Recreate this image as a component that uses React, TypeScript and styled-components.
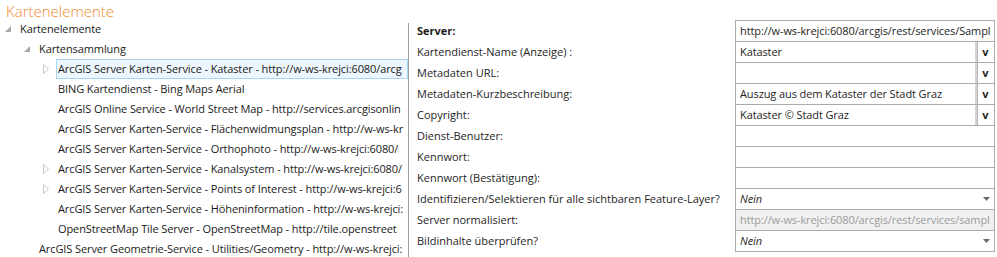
import React from 'react'
import styled, { createGlobalStyle, css } from 'styled-components'

const GlobalStyle = createGlobalStyle`
  html, body {
    margin: 0;
    padding: 0;
    background: #ffffff;
  }
  body {
    font-family: 'Open Sans', 'Noto Sans', sans-serif;
    font-size: 11px;
    color: #1e1e1e;
  }
`

type Toggle = 'open' | 'closed' | 'none'

interface TreeItem {
  level: number
  text: string
  toggle: Toggle
  selected?: boolean
}

const treeItems: TreeItem[] = [
  { level: 0, text: 'Kartenelemente', toggle: 'open' },
  { level: 1, text: 'Kartensammlung', toggle: 'open' },
  { level: 2, text: 'ArcGIS Server Karten-Service - Kataster - http://w-ws-krejci:6080/arcg', toggle: 'closed', selected: true },
  { level: 2, text: 'BING Kartendienst - Bing Maps Aerial', toggle: 'none' },
  { level: 2, text: 'ArcGIS Online Service - World Street Map - http://services.arcgisonlin', toggle: 'none' },
  { level: 2, text: 'ArcGIS Server Karten-Service - Flächenwidmungsplan - http://w-ws-kr', toggle: 'none' },
  { level: 2, text: 'ArcGIS Server Karten-Service - Orthophoto - http://w-ws-krejci:6080/', toggle: 'none' },
  { level: 2, text: 'ArcGIS Server Karten-Service - Kanalsystem - http://w-ws-krejci:6080/', toggle: 'closed' },
  { level: 2, text: 'ArcGIS Server Karten-Service - Points of Interest - http://w-ws-krejci:6', toggle: 'closed' },
  { level: 2, text: 'ArcGIS Server Karten-Service - Höheninformation - http://w-ws-krejci:', toggle: 'none' },
  { level: 2, text: 'OpenStreetMap Tile Server - OpenStreetMap - http://tile.openstreet', toggle: 'none' },
  { level: 1, text: 'ArcGIS Server Geometrie-Service - Utilities/Geometry - http://w-ws-krejci:', toggle: 'none' },
]

type FieldKind = 'text' | 'lookup' | 'select' | 'disabled'

interface FormRow {
  label: string
  kind: FieldKind
  value?: string
  bold?: boolean
}

const formRows: FormRow[] = [
  { label: 'Server:', kind: 'text', value: 'http://w-ws-krejci:6080/arcgis/rest/services/Sampl', bold: true },
  { label: 'Kartendienst-Name (Anzeige) :', kind: 'lookup', value: 'Kataster' },
  { label: 'Metadaten URL:', kind: 'lookup', value: '' },
  { label: 'Metadaten-Kurzbeschreibung:', kind: 'lookup', value: 'Auszug aus dem Kataster der Stadt Graz' },
  { label: 'Copyright:', kind: 'lookup', value: 'Kataster © Stadt Graz' },
  { label: 'Dienst-Benutzer:', kind: 'text' },
  { label: 'Kennwort:', kind: 'text' },
  { label: 'Kennwort (Bestätigung):', kind: 'text' },
  { label: 'Identifizieren/Selektieren für alle sichtbaren Feature-Layer?', kind: 'select', value: 'Nein' },
  { label: 'Server normalisiert:', kind: 'disabled', value: 'http://w-ws-krejci:6080/arcgis/rest/services/sampl' },
  { label: 'Bildinhalte überprüfen?', kind: 'select', value: 'Nein' },
]

const Page = styled.div`
  display: flex;
  width: 997px;
  height: 257px;
  overflow: hidden;
`

const TreePanel = styled.div`
  width: 408px;
  flex-shrink: 0;
  display: flex;
  flex-direction: column;
`

const Title = styled.div`
  height: 19px;
  padding: 1px 0 0 6px;
  box-sizing: border-box;
  font-size: 15px;
  line-height: 20px;
  font-weight: 300;
  color: #ee8a2e;
  white-space: nowrap;
`

const TreeList = styled.div`
  display: flex;
  flex-direction: column;
`

const TreeRow = styled.div<{ $level: number }>`
  display: flex;
  align-items: stretch;
  height: 20px;
  padding-left: ${(p) => 2 + p.$level * 19}px;
`

const ToggleBox = styled.div`
  width: 16px;
  flex-shrink: 0;
  display: flex;
  align-items: center;
  justify-content: flex-start;
  padding-left: 3px;
  box-sizing: border-box;
`

const NodeLabel = styled.div<{ $selected?: boolean }>`
  flex: 1;
  min-width: 0;
  overflow: hidden;
  white-space: nowrap;
  line-height: 18px;
  letter-spacing: -0.1px;
  padding: 0 3px 0 1px;
  border: 1px solid transparent;
  color: #1a1a1a;
  ${(p) =>
    p.$selected &&
    css`
      border-color: #a6d6f7;
      background: #edf6fd;
    `}
`

const Splitter = styled.div`
  width: 1px;
  flex-shrink: 0;
  margin-top: 23px;
  background: #a0a0a0;
`

const FormGrid = styled.div`
  flex: 1;
  display: grid;
  grid-template-columns: 1fr 260px;
  grid-auto-rows: 21px;
  padding: 20px 2px 0 8px;
  align-content: start;
`

const Label = styled.div<{ $bold?: boolean }>`
  line-height: 21px;
  white-space: nowrap;
  font-weight: ${(p) => (p.$bold ? 700 : 400)};
  color: #1e1e1e;
`

const Field = styled.div<{ $disabled?: boolean }>`
  height: 22px;
  box-sizing: border-box;
  border: 1px solid #ababab;
  display: flex;
  align-items: stretch;
  background: ${(p) => (p.$disabled ? '#f0f0f0' : '#ffffff')};
`

const FieldText = styled.div<{ $italic?: boolean; $muted?: boolean }>`
  flex: 1;
  min-width: 0;
  overflow: hidden;
  white-space: nowrap;
  line-height: 20px;
  padding-left: 4px;
  letter-spacing: -0.1px;
  font-style: ${(p) => (p.$italic ? 'italic' : 'normal')};
  color: ${(p) => (p.$muted ? '#9c9c9c' : '#1e1e1e')};
`

const LookupButton = styled.div`
  width: 17px;
  flex-shrink: 0;
  border-left: 2px solid #d4d4d4;
  box-shadow: inset 1px 0 0 #b4b4b4;
  display: flex;
  align-items: center;
  justify-content: center;
  font-weight: 700;
  font-size: 11px;
  line-height: 20px;
  color: #1e1e1e;
`

const ArrowBox = styled.div`
  width: 16px;
  flex-shrink: 0;
  display: flex;
  align-items: center;
  justify-content: center;
`

const ExpandedGlyph = () => (
  <svg width='6' height='6' viewBox='0 0 6 6'>
    <polygon points='6,0 6,6 0,6' fill='#a8a8a8' />
  </svg>
)

const CollapsedGlyph = () => (
  <svg width='6' height='10' viewBox='0 0 6 10'>
    <polygon points='0.5,0.5 5.5,5 0.5,9.5' fill='none' stroke='#c8c8c8' strokeWidth='1' />
  </svg>
)

const DropArrow = () => (
  <svg width='7' height='4' viewBox='0 0 7 4'>
    <polygon points='0,0 7,0 3.5,4' fill='#6a6a6a' />
  </svg>
)

const renderField = (row: FormRow) => {
  switch (row.kind) {
    case 'lookup':
      return (
        <Field>
          <FieldText>{row.value}</FieldText>
          <LookupButton>v</LookupButton>
        </Field>
      )
    case 'select':
      return (
        <Field>
          <FieldText $italic>{row.value}</FieldText>
          <ArrowBox>
            <DropArrow />
          </ArrowBox>
        </Field>
      )
    case 'disabled':
      return (
        <Field $disabled>
          <FieldText $muted>{row.value}</FieldText>
        </Field>
      )
    default:
      return (
        <Field>
          <FieldText>{row.value}</FieldText>
        </Field>
      )
  }
}

export default function App() {
  return (
    <>
      <GlobalStyle />
      <Page>
        <TreePanel>
          <Title>Kartenelemente</Title>
          <TreeList>
            {treeItems.map((item, i) => (
              <TreeRow key={i} $level={item.level}>
                <ToggleBox>
                  {item.toggle === 'open' && <ExpandedGlyph />}
                  {item.toggle === 'closed' && <CollapsedGlyph />}
                </ToggleBox>
                <NodeLabel $selected={item.selected}>{item.text}</NodeLabel>
              </TreeRow>
            ))}
          </TreeList>
        </TreePanel>
        <Splitter />
        <FormGrid>
          {formRows.map((row, i) => (
            <React.Fragment key={i}>
              <Label $bold={row.bold}>{row.label}</Label>
              {renderField(row)}
            </React.Fragment>
          ))}
        </FormGrid>
      </Page>
    </>
  )
}
